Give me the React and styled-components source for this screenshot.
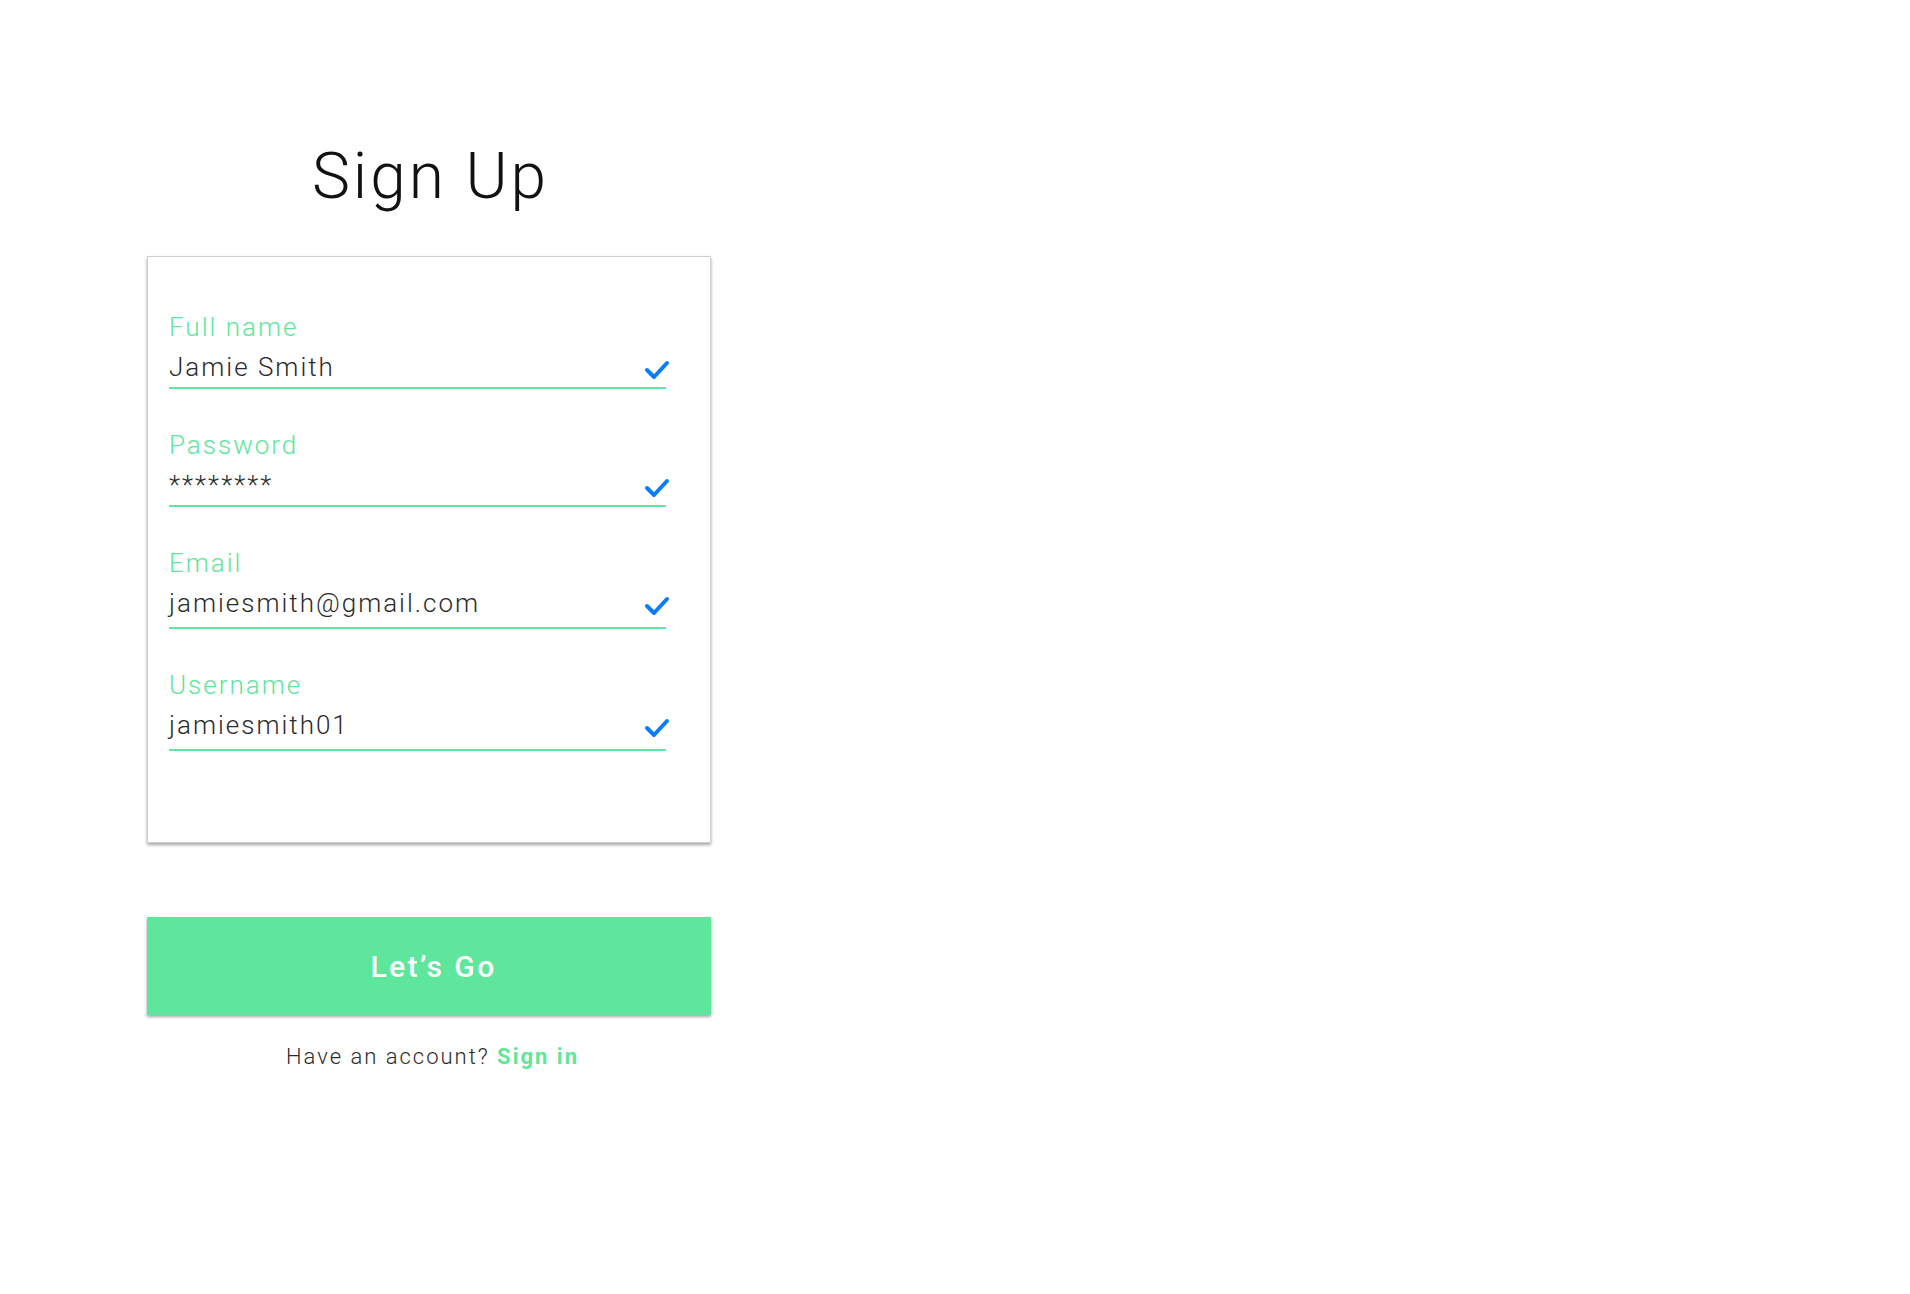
import styled, { createGlobalStyle } from "styled-components"

const green = "#5ee69c"
const blue = "#0a7cff"

const Global = createGlobalStyle`
  body {
    margin: 0;
    background: #fff;
    font-family: Roboto, "Liberation Sans", sans-serif;
  }
`

const Page = styled.main`
  padding: 145px 0 0 146px;
`

const Column = styled.div`
  width: 565px;
  display: flex;
  flex-direction: column;
  align-items: center;
`

const Title = styled.h1`
  margin: 0 0 47px 4px;
  font-size: 64px;
  line-height: 1;
  font-weight: 300;
  letter-spacing: 3px;
  color: #111;
`

const Card = styled.form`
  box-sizing: border-box;
  width: 564px;
  height: 587px;
  align-self: flex-end;
  padding: 54px 44px 0 21px;
  border: 1px solid #cfcfcf;
  box-shadow: 0 2px 3px rgba(0, 0, 0, 0.35);
  display: flex;
  flex-direction: column;
  gap: 40px;
`

const Field = styled.div`
  display: flex;
  flex-direction: column;
`

const Label = styled.label`
  font-size: 26px;
  line-height: 32px;
  font-weight: 300;
  letter-spacing: 2px;
  color: ${green};
`

const Row = styled.div`
  margin-top: 8px;
  padding-bottom: ${p => p.$low ? 8 : 4}px;
  border-bottom: 2px solid ${green};
  display: flex;
  align-items: center;
  justify-content: space-between;
`

const Value = styled.span`
  font-size: 26px;
  line-height: 32px;
  font-weight: 300;
  letter-spacing: 2px;
  color: #2b2b2b;
`

const Check = styled.svg`
  width: 28px;
  height: 24px;
  margin-right: -5px;
  margin-top: 6px;
  flex-shrink: 0;
`

const Button = styled.button`
  width: 564px;
  height: 98px;
  margin-top: 74px;
  padding: 0 0 0 10px;
  border: none;
  background: ${green};
  color: #fff;
  font-family: Roboto, "Liberation Sans", sans-serif;
  font-size: 30px;
  font-weight: 500;
  letter-spacing: 2.4px;
  box-shadow: 0 2px 3px rgba(0, 0, 0, 0.35);
  cursor: pointer;
`

const Footer = styled.p`
  margin: 27px 0 0 8px;
  font-size: 22px;
  line-height: 30px;
  font-weight: 300;
  letter-spacing: 2px;
  color: #2b2b2b;
`

const SignIn = styled.a`
  color: ${green};
  font-weight: 700;
  text-decoration: none;
`

const fields = [
  { label: "Full name", value: "Jamie Smith" },
  { label: "Password", value: "********" },
  { label: "Email", value: "jamiesmith@gmail.com", low: true },
  { label: "Username", value: "jamiesmith01", low: true },
]

const Tick = () => (
  <Check viewBox="0 0 28 24" fill="none">
    <polyline points="4,12 11,19 24,5" stroke={blue} strokeWidth="4" strokeLinecap="round" strokeLinejoin="round" />
  </Check>
)

const App = () => {
  return <>
    <Global />
    <Page>
      <Column>
        <Title>Sign Up</Title>
        <Card>
          {fields.map(f => (
            <Field key={f.label}>
              <Label>{f.label}</Label>
              <Row $low={f.low}>
                <Value>{f.value}</Value>
                <Tick />
              </Row>
            </Field>
          ))}
        </Card>
        <Button type="button">Let’s Go</Button>
        <Footer>Have an account? <SignIn href="#">Sign in</SignIn></Footer>
      </Column>
    </Page>
  </>
}

export default App
